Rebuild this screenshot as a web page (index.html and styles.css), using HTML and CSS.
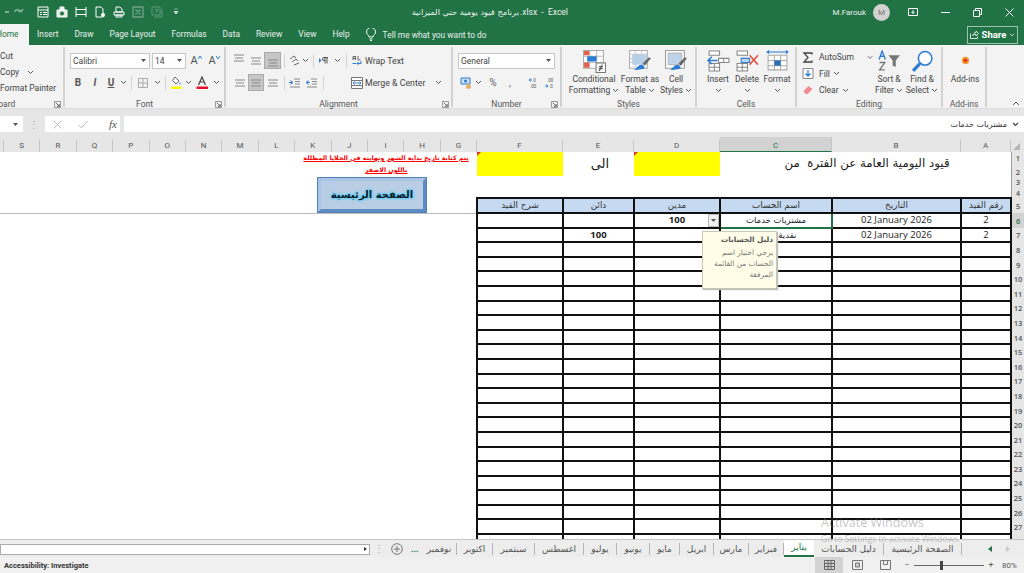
FILE: index.html
```html
<!DOCTYPE html>
<html lang="en">
<head>
    <meta charset="UTF-8">
    <title>Excel</title>
    <link rel="stylesheet" href="styles.css">
</head>
<body>
    <svg class="sprite" width="0" height="0">
        <symbol id="chev" viewBox="0 0 7 5"><path d="M1 1l2.500 2.500L6 1" fill="none" stroke="#555" stroke-width="1"/></symbol>
        <symbol id="launch" viewBox="0 0 8 8"><path d="M.5.5h7v7h-7z" fill="none" stroke="#888"/><path d="M2 2l4 4M6 3.500V6H3.500" fill="none" stroke="#555"/></symbol>
        <symbol id="lines" viewBox="0 0 12 8"><path d="M1 1h10M2 4h8M1 7h10" stroke="#888" fill="none"/></symbol>
    </svg>

    <div class="titlebar">
        <div class="qat">
            <svg class="q q-undo" width="20" height="12" viewBox="0 0 20 12"><path d="M-4 6h8" stroke="#7fae94" stroke-width="2"/><path d="M10 6c0-3 5-3 6 0M16 6l2-3M16 6l-3-1" fill="none" stroke="#7fae94" stroke-width="1.500"/></svg>
            <svg class="q" width="12" height="12" viewBox="0 0 12 12"><path d="M1 1h10v10H1z" fill="none" stroke="#fff"/><path d="M1 4h10M3 6.500h2M6 6.500h4M3 8.500h2M6 8.500h4" stroke="#fff"/></svg>
            <svg class="q" width="12" height="12" viewBox="0 0 12 12"><path d="M1 4h10v7H1zM4 1h4v3H4z" fill="#dfeae3" stroke="#fff"/><circle cx="6" cy="7.500" r="2" fill="#217346"/></svg>
            <svg class="q" width="12" height="12" viewBox="0 0 12 12"><path d="M1 1v10M11 1v10M1 3.500h10M1 8.500h10" fill="none" stroke="#fff"/></svg>
            <svg class="q" width="12" height="12" viewBox="0 0 12 12"><path d="M2 1h5l2 2v8H2z" fill="none" stroke="#fff"/><circle cx="9" cy="9" r="2" fill="#fff"/></svg>
            <svg class="q" width="12" height="12" viewBox="0 0 12 12"><path d="M3 1h4l2 2v3H3zM1 6h10v3H1zM3 9h6v2H3z" fill="none" stroke="#fff"/></svg>
            <svg class="q" width="12" height="12" viewBox="0 0 12 12"><path d="M1 1h10v10H1zM3.500 3.500l5 5M8.500 3.500l-5 5" fill="none" stroke="#6fa488" stroke-width="1.300"/></svg>
            <svg class="q" width="12" height="12" viewBox="0 0 12 12"><path d="M1 1h8v8H1zM3 11h8V3M4 3.500h3L5 7" fill="none" stroke="#5f9a7a"/></svg>
            <svg class="q" width="12" height="12" viewBox="0 0 12 12"><path d="M4.500 3h3M4 5.500h4L6 8z" fill="#e8f0eb" stroke="#e8f0eb" stroke-width=".6"/></svg>
        </div>
        <div class="doc-title"><span class="ar" dir="rtl">برنامج قيود يومية حتي الميزانية</span><span>.xlsx &nbsp;- &nbsp;Excel</span></div>
        <div class="account">
            <span class="user">M.Farouk</span>
            <span class="avatar">M</span>
            <div class="win-btns">
                <svg width="10" height="8" viewBox="0 0 10 8"><path d="M.5.5h9v7h-9z" fill="none" stroke="#fff"/><path d="M5 2v3.500M3.500 4L5 5.500 6.500 4" fill="none" stroke="#fff"/></svg>
                <svg width="9" height="1" viewBox="0 0 9 1"><path d="M0 .5h9" stroke="#fff"/></svg>
                <svg width="9" height="9" viewBox="0 0 9 9"><path d="M.5 2.500h6v6h-6zM2.500 2.500v-2h6v6h-2" fill="none" stroke="#fff"/></svg>
                <svg width="9" height="9" viewBox="0 0 9 9"><path d="M.5.5l8 8M8.500.5l-8 8" stroke="#fff"/></svg>
            </div>
        </div>
    </div>

    <div class="tabbar">
        <span class="tab home">Home</span>
        <span class="tab">Insert</span>
        <span class="tab">Draw</span>
        <span class="tab">Page Layout</span>
        <span class="tab">Formulas</span>
        <span class="tab">Data</span>
        <span class="tab">Review</span>
        <span class="tab">View</span>
        <span class="tab">Help</span>
        <span class="tell">
            <svg width="10" height="13" viewBox="0 0 10 13"><path d="M3 9c0-2-2.500-2.500-2.500-5a4.500 4.500 0 0 1 9 0C9.500 6.500 7 7 7 9zM3.500 11h3M4 12.500h2" fill="none" stroke="#fff"/></svg>
            Tell me what you want to do
        </span>
        <span class="share">
            <svg width="9" height="9" viewBox="0 0 9 9"><path d="M.5 3.500v5h7v-2M3 5.500c0-2 2-3 3-3V1l2.500 2.500L6 6V4.500c-1 0-2.500 0-3 1z" fill="none" stroke="#fff" stroke-width=".8"/></svg>
            <b>Share</b>
            <svg class="chev-w" width="6" height="4" viewBox="0 0 7 5"><path d="M1 1l2.500 2.500L6 1" fill="none" stroke="#fff"/></svg>
        </span>
    </div>

    <div class="ribbon">
        <section class="group g-clip">
            <div class="body clip-body">
                <div>Cut</div>
                <div class="copy">Copy <svg class="chev"><use href="#chev"/></svg></div>
                <div>Format Painter</div>
            </div>
            <div class="label clip-label"><span>Clipboard</span><svg class="launch"><use href="#launch"/></svg></div>
        </section>

        <section class="group g-font">
            <div class="body stack">
                <div class="row">
                    <div class="combo c80">Calibri<svg class="caret" width="5" height="3" viewBox="0 0 5 3"><path d="M0 0h5L2.500 3z" fill="#555"/></svg></div>
                    <div class="combo c34">14<svg class="caret" width="5" height="3" viewBox="0 0 5 3"><path d="M0 0h5L2.500 3z" fill="#555"/></svg></div>
                    <span class="t t18 grow-a">A<svg width="4" height="3" viewBox="0 0 4 3"><path d="M0 3l2-3 2 3" fill="none" stroke="#2b7cd3"/></svg></span>
                    <span class="t t18 grow-a">A<svg width="4" height="3" viewBox="0 0 4 3"><path d="M0 0l2 3 2-3" fill="none" stroke="#2b7cd3"/></svg></span>
                </div>
                <div class="row">
                    <span class="t t16 fmt"><b>B</b></span>
                    <span class="t t18 fmt"><b><em>I</em></b></span>
                    <span class="t t14 fmt"><b><u>U</u></b></span>
                    <span class="t t10"><svg class="chev"><use href="#chev"/></svg></span>
                    <span class="t t6"><i class="sep"></i></span>
                    <span class="t t18"><svg width="10" height="10" viewBox="0 0 10 10"><path d="M.5.500h9v9h-9zM5 .5v9M.5 5h9" fill="none" stroke="#aaa"/></svg></span>
                    <span class="t t10"><svg class="chev"><use href="#chev"/></svg></span>
                    <span class="t t6"><i class="sep"></i></span>
                    <span class="t t16"><svg width="12" height="13" viewBox="0 0 12 13"><path d="M5 1l4 4-3 3-3.500-3.500z" fill="#fff" stroke="#666"/><path d="M10 6c1 1.500 1 2.500 0 2.500S9 7.500 10 6" fill="#5b9bd5"/><path d="M1 10.500h10.500V13H1z" fill="#ffff00"/></svg></span>
                    <span class="t t8"><svg class="chev"><use href="#chev"/></svg></span>
                    <span class="t t20"><svg width="12" height="13" viewBox="0 0 12 13"><path d="M2.500 9L6 1l3.500 8M4 6h4" fill="none" stroke="#444" stroke-width="1.200"/><path d="M.5 10.500H12V13H.5z" fill="#e8112d"/></svg></span>
                    <span class="t t8"><svg class="chev"><use href="#chev"/></svg></span>
                </div>
            </div>
            <div class="label"><span>Font</span><svg class="launch"><use href="#launch"/></svg></div>
        </section>

        <section class="group g-align">
            <div class="body stack">
                <div class="row">
                    <span class="t t16"><svg class="al al-top"><use href="#lines"/></svg></span>
                    <span class="t t17"><svg class="al"><use href="#lines"/></svg></span>
                    <span class="t t17 on"><svg class="al al-low"><use href="#lines"/></svg></span>
                    <span class="t t6"><i class="sep"></i></span>
                    <span class="t t14"><svg width="11" height="11" viewBox="0 0 11 11"><path d="M1 4l4-3 2 2M3 7l4-3 2 2M5 10l5-2" fill="none" stroke="#666"/></svg></span>
                    <span class="t t8"><svg class="chev"><use href="#chev"/></svg></span>
                    <span class="t t8"><i class="sep"></i></span>
                    <span class="t t14"><svg width="10" height="7" viewBox="0 0 10 7"><path d="M0 1l2.500 2.500L0 6z" fill="#2b7cd3"/><path d="M5 .5h4M6 .5v6M8 .5v6M5 .5a1.500 1.500 0 0 0 0 3h1" fill="none" stroke="#555"/></svg></span>
                    <span class="t t12"><svg class="chev"><use href="#chev"/></svg></span>
                    <span class="t t6"><i class="sep"></i></span>
                    <span class="t t16"><svg width="10" height="11" viewBox="0 0 10 11"><path d="M1 5V1.500h2.500V5M1 3.500h2.500M6 1v4h2.500" fill="none" stroke="#444" stroke-width=".8"/><path d="M4 8.500h-3.500M9 6v2.500H5M6.500 7L5 8.500 6.500 10" fill="none" stroke="#2b7cd3"/></svg></span>
                    <span class="txt">Wrap Text</span>
                </div>
                <div class="row">
                    <span class="t t17"><svg class="al"><use href="#lines"/></svg></span>
                    <span class="t t16 on"><svg class="al"><use href="#lines"/></svg></span>
                    <span class="t t18"><svg class="al"><use href="#lines"/></svg></span>
                    <span class="t t4"><i class="sep"></i></span>
                    <span class="t t16"><svg width="11" height="10" viewBox="0 0 11 10"><path d="M5 1h6M6 3.500h5M6 6h5M1 9h10" stroke="#888"/><path d="M0 4.500h3M1.500 2.500L4 4.500 1.500 6.500" fill="none" stroke="#2b7cd3"/></svg></span>
                    <span class="t t18"><svg width="11" height="10" viewBox="0 0 11 10"><path d="M5 1h6M6 3.500h5M6 6h5M1 9h10" stroke="#888"/><path d="M4 4.500H1M2.500 2.500L0 4.500l2.500 2" fill="none" stroke="#2b7cd3"/></svg></span>
                    <span class="t t6"><i class="sep"></i></span>
                    <span class="t t23"></span>
                    <span class="t t16"><svg width="12" height="12" viewBox="0 0 12 12"><path d="M.5.500h11v11H.5zM.5 3.500h11M.5 8.500h11" fill="#fff" stroke="#777"/><path d="M2 6h8M3.500 4.500L2 6l1.500 1.500M8.500 4.500L10 6 8.500 7.500" fill="none" stroke="#2b7cd3"/></svg></span>
                    <span class="txt merge">Merge &amp; Center</span>
                    <span class="t t26"><svg class="chev"><use href="#chev"/></svg></span>
                </div>
            </div>
            <div class="label"><span>Alignment</span><svg class="launch"><use href="#launch"/></svg></div>
        </section>

        <section class="group g-num">
            <div class="body stack">
                <div class="row">
                    <div class="combo c97">General<svg class="caret" width="5" height="3" viewBox="0 0 5 3"><path d="M0 0h5L2.500 3z" fill="#555"/></svg></div>
                </div>
                <div class="row">
                    <span class="t t16"><svg width="12" height="12" viewBox="0 0 12 12"><path d="M1 1h9v6H1z" fill="#cfe2f5" stroke="#2b7cd3"/><circle cx="5.500" cy="4" r="1.500" fill="#2b7cd3"/><circle cx="8.500" cy="9.500" r="2.500" fill="#e5b06a"/></svg></span>
                    <span class="t t8"><svg class="chev"><use href="#chev"/></svg></span>
                    <span class="t t22 sym">%</span>
                    <span class="t t12 sym">,</span>
                    <span class="t t10"></span>
                    <span class="t t16"><svg width="11" height="11" viewBox="0 0 11 11"><text class="dec" x="3" y="4.500">.0</text><text class="dec" x="1" y="10.500">.00</text><path d="M0 3h3M1.500 1.500L0 3l1.500 1.500" fill="none" stroke="#2b7cd3"/></svg></span>
                    <span class="t t16"><svg width="11" height="11" viewBox="0 0 11 11"><text class="dec" x="2" y="4.500">.00</text><text class="dec" x="4" y="10.500">.0</text><path d="M0 9h3M1.500 7.500L3 9 1.500 10.500" fill="none" stroke="#2b7cd3"/></svg></span>
                </div>
            </div>
            <div class="label"><span>Number</span><svg class="launch"><use href="#launch"/></svg></div>
        </section>

        <section class="group g-styles">
            <div class="body bigs">
                <div class="big b52">
                    <svg width="22" height="22" viewBox="0 0 22 22"><path d="M.5.500h19v17H.5z" fill="#fff" stroke="#aaa"/><path d="M6.500.5v17M13 .5v17M.5 6h19M.5 12h19" stroke="#bbb"/><path d="M1 1h5v4H1zM1 12h5v5H1z" fill="#e8604c"/><path d="M4 6h9v5H4z" fill="#2b7cd3"/><path d="M12.500 12.500h9v9h-9z" fill="#fff" stroke="#777"/><path d="M15 16h4M15 18h4M18.500 14l-3 6" fill="none" stroke="#444"/></svg>
                    <span>Conditional</span><span>Formatting <svg class="chev"><use href="#chev"/></svg></span>
                </div>
                <div class="big b40">
                    <svg width="22" height="22" viewBox="0 0 22 22"><path d="M.5.500h17v17H.5z" fill="#fff" stroke="#aaa"/><path d="M.5 4h17M.5 8h17M.5 12h17M6 .5v17M12 .5v17" stroke="#ccc"/><path d="M3 4h14v10H3z" fill="#b9cfe8"/><path d="M21 8l-6 7-2-2 6-6z" fill="#666"/><path d="M12 14c2 0 2.500 2 3 3 .5 1.500-9 2.500-11 2 3 0 4-5 8-5z" fill="#2b7cd3"/></svg>
                    <span>Format as</span><span>Table <svg class="chev"><use href="#chev"/></svg></span>
                </div>
                <div class="big b32">
                    <svg width="22" height="22" viewBox="0 0 22 22"><path d="M.5.500h18v17H.5z" fill="#fff" stroke="#999"/><path d="M3 3h13v11H3z" fill="#bed3ec" stroke="#bbb"/><path d="M21 8l-6 7-2-2 6-6z" fill="#666"/><path d="M12 14c2 0 2.500 2 3 3 .5 1.500-9 2.500-11 2 3 0 4-5 8-5z" fill="#2b7cd3"/></svg>
                    <span>Cell</span><span>Styles <svg class="chev"><use href="#chev"/></svg></span>
                </div>
            </div>
            <div class="label"><span>Styles</span></div>
        </section>

        <section class="group g-cells">
            <div class="body bigs">
                <div class="big b28">
                    <svg width="22" height="22" viewBox="0 0 22 22"><path d="M2 1h10v4H2zM2 13h10v7H2zM7 13v7M2 16.500h10M11 8h10v4H11zM16 8v4" fill="#fff" stroke="#888"/><path d="M10 10H1M4.500 6.500L1 10l3.500 3.500" fill="none" stroke="#2b7cd3" stroke-width="1.500"/></svg>
                    <span>Insert</span><span><svg class="chev"><use href="#chev"/></svg></span>
                </div>
                <div class="big b30">
                    <svg width="22" height="22" viewBox="0 0 22 22"><path d="M1 1h10v4H1zM1 13h10v7H1zM6 13v7M1 16.500h10" fill="#fff" stroke="#888"/><path d="M5 8h8v4H5z" fill="#bcd3ec" stroke="#2b7cd3"/><path d="M13 5l8 9M21 5l-8 9" stroke="#e0533d" stroke-width="1.500"/></svg>
                    <span>Delete</span><span><svg class="chev"><use href="#chev"/></svg></span>
                </div>
                <div class="big b30">
                    <svg width="22" height="22" viewBox="0 0 22 22"><path d="M2 5h18v14H2zM8 5v14M14 5v14M2 10h18M2 15h18" fill="#fff" stroke="#aaa"/><path d="M8 10h6v5H8z" fill="#2b6cb8"/><path d="M1 2h20M3 .5L1 2l2 1.500M19 .5L21 2l-2 1.500" fill="none" stroke="#2b7cd3"/></svg>
                    <span>Format</span><span><svg class="chev"><use href="#chev"/></svg></span>
                </div>
            </div>
            <div class="label"><span>Cells</span></div>
        </section>

        <section class="group g-edit">
            <div class="body bigs">
                <div class="small-col">
                    <div class="small"><svg width="10" height="11" viewBox="0 0 10 11"><path d="M9 2.500V1H1l4 4.500L1 10h8V8.500" fill="none" stroke="#444" stroke-width="1.300"/></svg><span>AutoSum</span><svg class="chev auto-chev"><use href="#chev"/></svg></div>
                    <div class="small"><svg width="11" height="11" viewBox="0 0 11 11"><path d="M.5.500h10v10H.5z" fill="#fff" stroke="#888"/><path d="M5.500 2v6M3 5.500l2.500 2.500L8 5.500" fill="none" stroke="#2b7cd3" stroke-width="1.300"/></svg><span>Fill</span><svg class="chev"><use href="#chev"/></svg></div>
                    <div class="small"><svg width="11" height="10" viewBox="0 0 11 10"><path d="M1 6l5-5 4 3-5 5H3z" fill="#f08a93"/></svg><span>Clear</span><svg class="chev"><use href="#chev"/></svg></div>
                </div>
                <div class="big b32">
                    <svg width="22" height="22" viewBox="0 0 22 22"><path d="M1 9l3-8 3 8M2 6h4" fill="none" stroke="#2b7cd3" stroke-width="1.300"/><path d="M1.500 12h5l-5 7h5" fill="none" stroke="#777" stroke-width="1.300"/><path d="M10 5h11l-4 5v6l-3-1v-5z" fill="#777"/></svg>
                    <span>Sort &amp;</span><span>Filter <svg class="chev"><use href="#chev"/></svg></span>
                </div>
                <div class="big b34">
                    <svg width="22" height="22" viewBox="0 0 22 22"><circle cx="13.500" cy="8" r="6.500" fill="#fff" stroke="#2b7cd3" stroke-width="1.500"/><path d="M8.500 13L2 20" stroke="#2b7cd3" stroke-width="3"/></svg>
                    <span>Find &amp;</span><span>Select <svg class="chev"><use href="#chev"/></svg></span>
                </div>
            </div>
            <div class="label"><span>Editing</span></div>
        </section>

        <section class="group g-addin">
            <div class="body bigs">
                <div class="big b44">
                    <svg width="22" height="22" viewBox="0 0 22 22"><circle cx="11" cy="10" r="3.500" fill="#f0a030"/><circle cx="11" cy="10" r="1.800" fill="#e5352b"/></svg>
                    <span>Add-ins</span>
                </div>
            </div>
            <div class="label"><span>Add-ins</span></div>
        </section>

        <svg class="collapse" width="8" height="5" viewBox="0 0 8 5"><path d="M1 4l3-3 3 3" fill="none" stroke="#555"/></svg>
    </div>

    <div class="formula">
        <div class="namebox"><svg class="caret" width="5" height="3" viewBox="0 0 5 3"><path d="M0 0h5L2.500 3z" fill="#555"/></svg></div>
        <span class="grip">⋮</span>
        <div class="fx-btns">
            <svg width="9" height="9" viewBox="0 0 9 9"><path d="M.5.500l8 8M8.500.5l-8 8" stroke="#bbb"/></svg>
            <svg width="10" height="9" viewBox="0 0 10 9"><path d="M.5 5l3 3 6-7" fill="none" stroke="#bbb"/></svg>
            <span class="fx">fx</span>
        </div>
        <div class="fbar">
            <span class="ar">مشتريات خدمات</span>
            <svg width="7" height="5" viewBox="0 0 7 5"><path d="M1 1l2.500 2.500L6 1" fill="none" stroke="#444" stroke-width="1.200"/></svg>
        </div>
    </div>

    <div class="colhead">
        <span></span><span>S</span><span>R</span><span>Q</span><span>P</span><span>O</span><span>N</span><span>M</span><span>L</span><span>K</span><span>J</span><span>I</span><span>H</span><span>G</span>
        <span>F</span><span>E</span><span>D</span><span class="sel">C</span><span>B</span><span>A</span>
        <span class="corner"></span>
    </div>

    <div class="sheet">
        <table>
            <colgroup><col class="c-left"><col class="c-f"><col class="c-e"><col class="c-d"><col class="c-c"><col class="c-b"><col class="c-a"><col class="c-rh"></colgroup>
            <tr class="r1">
                <td class="free" rowspan="2"><p class="note ar">يتم كتابة تاريخ بداية الشهر ونهايته في الخلايا المظللة<br>باللون الاصفر</p></td>
                <td class="free yellow flag" rowspan="2"></td>
                <td class="free to ar" rowspan="2">الى</td>
                <td class="free yellow flag" rowspan="2"></td>
                <td class="free heading ar" colspan="3" rowspan="2">قيود اليومية العامة عن الفترة &nbsp;من</td>
                <td class="rh">1</td>
            </tr>
            <tr class="r2"><td class="rh low">2</td></tr>
            <tr class="r3">
                <td class="free pane" rowspan="3"><div class="btn-wrap"><a class="main-btn ar">الصفحة الرئيسية</a></div></td>
                <td class="free" colspan="6" rowspan="2"></td>
                <td class="rh">3</td>
            </tr>
            <tr class="r4"><td class="rh">4</td></tr>
            <tr class="r5 hd ar">
                <td>شرح القيد</td><td>دائن</td><td>مدين</td><td>اسم الحساب</td><td>التاريخ</td><td>رقم القيد</td><td class="rh">5</td>
            </tr>
            <tr>
                <td class="free"></td><td></td><td></td><td class="num dd-cell">100<span class="dd"><svg width="5" height="3" viewBox="0 0 5 3"><path d="M0 0h5L2.500 3z" fill="#555"/></svg></span></td><td class="active ar">مشتريات خدمات</td><td class="val">02 January 2026</td><td class="val">2</td><td class="rh rh-on">6</td>
            </tr>
            <tr>
                <td class="free"></td><td></td><td class="num">100</td><td></td><td class="val ar">نقدية بالبنك</td><td class="val">02 January 2026</td><td class="val">2</td><td class="rh">7</td>
            </tr>
            <tr><td class="free"></td><td></td><td></td><td></td><td></td><td></td><td></td><td class="rh">8</td></tr>
            <tr><td class="free"></td><td></td><td></td><td></td><td></td><td></td><td></td><td class="rh">9</td></tr>
            <tr><td class="free"></td><td></td><td></td><td></td><td></td><td></td><td></td><td class="rh">10</td></tr>
            <tr><td class="free"></td><td></td><td></td><td></td><td></td><td></td><td></td><td class="rh">11</td></tr>
            <tr><td class="free"></td><td></td><td></td><td></td><td></td><td></td><td></td><td class="rh">12</td></tr>
            <tr><td class="free"></td><td></td><td></td><td></td><td></td><td></td><td></td><td class="rh">13</td></tr>
            <tr><td class="free"></td><td></td><td></td><td></td><td></td><td></td><td></td><td class="rh">14</td></tr>
            <tr><td class="free"></td><td></td><td></td><td></td><td></td><td></td><td></td><td class="rh">15</td></tr>
            <tr><td class="free"></td><td></td><td></td><td></td><td></td><td></td><td></td><td class="rh">16</td></tr>
            <tr><td class="free"></td><td></td><td></td><td></td><td></td><td></td><td></td><td class="rh">17</td></tr>
            <tr><td class="free"></td><td></td><td></td><td></td><td></td><td></td><td></td><td class="rh">18</td></tr>
            <tr><td class="free"></td><td></td><td></td><td></td><td></td><td></td><td></td><td class="rh">19</td></tr>
            <tr><td class="free"></td><td></td><td></td><td></td><td></td><td></td><td></td><td class="rh">20</td></tr>
            <tr><td class="free"></td><td></td><td></td><td></td><td></td><td></td><td></td><td class="rh">21</td></tr>
            <tr><td class="free"></td><td></td><td></td><td></td><td></td><td></td><td></td><td class="rh">22</td></tr>
            <tr><td class="free"></td><td></td><td></td><td></td><td></td><td></td><td></td><td class="rh">23</td></tr>
            <tr><td class="free"></td><td></td><td></td><td></td><td></td><td></td><td></td><td class="rh">24</td></tr>
            <tr><td class="free"></td><td></td><td></td><td></td><td></td><td></td><td></td><td class="rh">25</td></tr>
            <tr><td class="free"></td><td></td><td></td><td></td><td></td><td></td><td></td><td class="rh">26</td></tr>
            <tr><td class="free"></td><td></td><td></td><td></td><td></td><td></td><td></td><td class="rh">27</td></tr>
            <tr><td class="free"></td><td></td><td></td><td></td><td></td><td></td><td></td><td class="rh"></td></tr>
        </table>
        <div class="tooltip ar" dir="rtl">
            <b>دليل الحسابات</b>
            <p>يرجي اختيار اسم الحساب من القائمة المرفقة</p>
        </div>
    </div>

    <div class="sheettabs">
        <div class="hscroll"><span class="arrow-r"></span></div>
        <span class="grip grip-tabs">⋮</span>
        <svg class="plus" width="12" height="12" viewBox="0 0 12 12"><circle cx="6" cy="6" r="5.300" fill="none" stroke="#777"/><path d="M3 6h6M6 3v6" stroke="#777"/></svg>
        <span class="dots">...</span>
        <div class="stabs ar">
            <span class="st35">نوفمبر</span>
            <span class="st36">اكتوبر</span>
            <span class="st42">سبتمبر</span>
            <span class="st49">اغسطس</span>
            <span class="st33">يوليو</span>
            <span class="st33">يونيو</span>
            <span class="st30">مايو</span>
            <span class="st34">ابريل</span>
            <span class="st35">مارس</span>
            <span class="st35">فبراير</span>
            <span class="st30 st-on">يناير</span>
            <span class="st70">دليل الحسابات</span>
            <span class="st78">الصفحة الرئيسية</span>
        </div>
        <div class="tab-nav">
            <svg width="4" height="6" viewBox="0 0 4 6"><path d="M4 0v6L0 3z" fill="#217346"/></svg>
            <svg width="4" height="6" viewBox="0 0 4 6"><path d="M0 0v6l4-3z" fill="#c8c8c8"/></svg>
        </div>
    </div>

    <div class="status">
        <span class="acc">Accessibility: Investigate</span>
        <div class="views">
            <span class="view view-on"><svg width="11" height="10" viewBox="0 0 11 10"><path d="M.5.500h10v9H.5zM4 .5v9M7 .5v9M.5 3.500h10M.5 6.500h10" fill="none" stroke="#666"/></svg></span>
            <span class="view"><svg width="11" height="10" viewBox="0 0 11 10"><path d="M.5.500h10v9H.5z" fill="none" stroke="#777"/><path d="M3.500 3h4v4h-4z" fill="#ccc" stroke="#777"/></svg></span>
            <span class="view"><svg width="11" height="10" viewBox="0 0 11 10"><path d="M.5.500h10v9H.5zM3.500.5v4h4v-4" fill="none" stroke="#777"/></svg></span>
        </div>
        <div class="zoom">
            <span class="zm">−</span>
            <div class="slider"><i class="thumb"></i></div>
            <span class="zm">+</span>
            <span class="pct">80%</span>
        </div>
    </div>

    <div class="activate">
        <div class="a1">Activate Windows</div>
        <div class="a2">Go to Settings to activate Windows.</div>
    </div>
</body>
</html>
```
FILE: styles.css
```css
* {
    box-sizing: border-box;
}
html, body {
    margin: 0;
    height: 100%;
}
body {
    position: relative;
    width: 1024px;
    height: 573px;
    overflow: hidden;
    display: flex;
    flex-direction: column;
    font-family: Roboto, sans-serif;
    font-size: 8.500px;
    color: #444;
    background-color: #e6e6e6;
}
.ar {
    font-family: "DejaVu Sans", sans-serif;
}
.sprite {
    position: absolute;
}

/* title bar + tabs */
.titlebar {
    height: 24px;
    flex: none;
    display: flex;
    align-items: center;
    background-color: #217346;
    color: #e9f1ec;
    position: relative;
}
.qat {
    display: flex;
    align-items: center;
    gap: 7px;
    padding-left: 5px;
}
.qat .q-undo {
    margin-right: 5px;
}
.doc-title {
    position: absolute;
    left: 410px;
    white-space: nowrap;
    font-size: 8.500px;
    display: flex;
    align-items: center;
    gap: 1px;
}
.doc-title .ar {
    display: block;
    width: 109px;
    font-size: 8.300px;
}
.account {
    margin-left: auto;
    display: flex;
    align-items: center;
    font-size: 8px;
}
.user {
    margin-right: 7px;
}
.avatar {
    width: 17px;
    height: 17px;
    border-radius: 50%;
    background-color: #d2d2d2;
    color: #777;
    display: flex;
    align-items: center;
    justify-content: center;
    font-size: 8px;
}
.win-btns {
    display: flex;
    align-items: center;
    gap: 23px;
    margin-left: 18px;
    padding-right: 10px;
}
.tabbar {
    height: 21px;
    flex: none;
    display: flex;
    align-items: center;
    background-color: #217346;
    color: #e9f1ec;
    font-size: 8.400px;
}
.tab {
    padding: 0 8px;
    height: 21px;
    line-height: 20px;
}
.tab.home {
    margin-left: -12px;
    width: 41px;
    background-color: #f3f3f3;
    color: #217346;
}
.tell {
    margin-left: 8px;
    display: flex;
    align-items: center;
    gap: 7px;
}
.share {
    margin-left: auto;
    margin-right: 6px;
    width: 51px;
    height: 18px;
    border: 1px solid #9dc2ad;
    display: flex;
    align-items: center;
    justify-content: center;
    gap: 3px;
    font-size: 9.500px;
    color: #fff;
}

/* ribbon */
.ribbon {
    height: 64px;
    flex: none;
    display: flex;
    position: relative;
    background-color: #f3f3f3;
    border-bottom: 1px solid #dcdcdc;
}
.group {
    flex: none;
    display: flex;
    flex-direction: column;
    border-right: 2px solid #d2d2d2;
    height: 60px;
    margin-top: 2px;
}
.g-clip { width: 65px; }
.g-font { width: 161px; }
.g-align { width: 227px; }
.g-num { width: 109px; }
.g-styles { width: 135px; }
.g-cells { width: 100px; }
.g-edit { width: 146px; }
.g-addin { width: 44px; }
.body {
    height: 53px;
    flex: none;
}
.label {
    position: relative;
    height: 9px;
    flex: none;
    line-height: 9px;
    text-align: center;
    font-size: 8.500px;
    color: #555;
}
.launch {
    position: absolute;
    right: 2px;
    top: 1px;
    width: 7px;
    height: 7px;
}
.clip-body {
    padding-top: 1px;
}
.clip-body div {
    height: 16px;
    line-height: 16px;
    white-space: nowrap;
}
.clip-body .copy .chev {
    margin-left: 6px;
}
.clip-label {
    text-align: left;
}
.clip-label span {
    margin-left: -21px;
}
.stack {
    padding: 6px 0 0 5px;
    display: flex;
    flex-direction: column;
    gap: 7px;
}
.row {
    display: flex;
    align-items: center;
    height: 15px;
}
.chev {
    width: 7px;
    height: 5px;
    vertical-align: 0;
}
.combo {
    height: 16px;
    display: flex;
    align-items: center;
    justify-content: space-between;
    padding: 0 3px 0 2px;
    background-color: #fff;
    border: 1px solid #c6c6c6;
    flex: none;
}
.c80 { width: 80px; margin-right: 2px; }
.c34 { width: 34px; margin-right: 1px; }
.c97 { width: 97px; }
.t {
    flex: none;
    height: 17px;
    display: flex;
    align-items: center;
    justify-content: center;
}
.t4 { width: 4px; }
.t6 { width: 6px; }
.t8 { width: 8px; }
.t10 { width: 10px; }
.t12 { width: 12px; }
.t14 { width: 14px; }
.t16 { width: 16px; }
.t17 { width: 17px; }
.t18 { width: 18px; }
.t20 { width: 20px; }
.t22 { width: 22px; }
.t23 { width: 23px; }
.t26 { width: 26px; }
.on {
    background-color: #c6c6c6;
    border: 1px solid #aaa;
}
.sep {
    display: block;
    width: 1px;
    height: 14px;
    background-color: #d4d4d4;
}
.fmt {
    font-size: 10px;
    color: #555;
}
.grow-a {
    font-size: 11px;
    color: #555;
}
.grow-a svg {
    margin-top: -7px;
}
.al {
    width: 12px;
    height: 8px;
}
.al-top {
    margin-bottom: 5px;
}
.al-low {
    margin-top: 4px;
}
.txt {
    white-space: nowrap;
    font-size: 8.800px;
}
.merge {
    width: 60px;
}
.sym {
    font-size: 10px;
    color: #666;
}
.dec {
    font-size: 4.500px;
    fill: #555;
}
.bigs {
    display: flex;
}
.g-styles .bigs { padding-left: 6px; }
.g-cells .bigs { padding-left: 7px; }
.g-edit .bigs { padding-left: 4px; }
.big {
    display: flex;
    flex-direction: column;
    align-items: center;
    padding-top: 3px;
    flex: none;
    white-space: nowrap;
}
.big > svg {
    height: 23px;
    width: 23px;
    flex: none;
    margin-bottom: 1px;
}
.big span {
    height: 11px;
    line-height: 11px;
}
.b28 { width: 28px; }
.b30 { width: 30px; }
.b32 { width: 32px; }
.b34 { width: 34px; }
.b40 { width: 40px; }
.b44 { width: 44px; }
.b52 { width: 52px; }
.small-col {
    width: 72px;
    padding-top: 2px;
    flex: none;
}
.small {
    height: 16.500px;
    display: flex;
    align-items: center;
    gap: 3px;
}
.small > svg:first-child {
    flex: none;
    width: 14px;
    margin-right: 1px;
}
.auto-chev {
    margin-left: 10px;
}
.collapse {
    position: absolute;
    right: 4px;
    bottom: 2px;
}

/* formula bar */
.formula {
    height: 28px;
    flex: none;
    display: flex;
    align-items: center;
    padding-top: 2px;
    background-color: #e6e6e6;
}
.namebox {
    width: 23px;
    height: 16px;
    background-color: #fff;
    display: flex;
    align-items: center;
    justify-content: flex-end;
    padding-right: 5px;
}
.grip {
    width: 22px;
    text-align: center;
    font-size: 10px;
    color: #aaa;
}
.fx-btns {
    width: 75px;
    height: 16px;
    background-color: #fff;
    display: flex;
    align-items: center;
    gap: 16px;
    padding-left: 8px;
}
.fx {
    margin-left: 5px;
    font-family: "Liberation Serif", serif;
    font-style: italic;
    font-size: 11px;
    color: #555;
}
.fbar {
    margin-left: 4px;
    flex: 1;
    height: 16px;
    background-color: #fff;
    display: flex;
    align-items: center;
    justify-content: flex-end;
    gap: 5px;
    padding-right: 5px;
    font-size: 8px;
    color: #333;
}

/* column headers */
.colhead {
    height: 15px;
    flex: none;
    display: grid;
    grid-template-columns: 4px repeat(13, 36.4px) 86px 71px 86px 112px 129px 50px 13px;
    background-color: #e6e6e6;
    font-size: 8px;
    color: #555;
}
.colhead span {
    height: 12px;
    margin-top: 3px;
    line-height: 12px;
    text-align: center;
    border-right: 1px solid #c6c6c6;
}
.colhead .sel {
    height: 15px;
    margin-top: 0;
    line-height: 18px;
    background-color: #d2d2d2;
    border-bottom: 1px solid #217346;
    color: #217346;
}
.colhead .corner {
    border: 0;
    position: relative;
}
.colhead .corner::after {
    content: "";
    position: absolute;
    right: 4px;
    bottom: 2px;
    border-style: solid;
    border-width: 0 0 7px 7px;
    border-color: transparent transparent #b5b5b5 transparent;
}

/* sheet */
.sheet {
    height: 387px;
    flex: none;
    position: relative;
    overflow: hidden;
    background-color: #fff;
}
table {
    width: 1024px;
    table-layout: fixed;
    border-collapse: collapse;
    background-color: #fff;
}
.c-left { width: 477px; }
.c-f { width: 86px; }
.c-e { width: 71px; }
.c-d { width: 86px; }
.c-c { width: 112px; }
.c-b { width: 129px; }
.c-a { width: 50px; }
.c-rh { width: 13px; }
tr {
    height: 14.600px;
}
.r1 { height: 11px; }
.r2 { height: 13px; }
.r3 { height: 10px; }
.r4 { height: 12px; }
.r5 { height: 15px; }
td {
    padding: 0;
    border: 2px solid #111;
    font-size: 8px;
    line-height: 10px;
    text-align: center;
    color: #222;
    overflow: hidden;
    white-space: nowrap;
}
td.free {
    border: none;
}
td.pane {
    border-bottom: 1px solid #bcbcbc;
    vertical-align: bottom;
}
td.rh {
    border: none;
    border-left: 1px solid #999;
    background-color: #e6e6e6;
    font-family: "Open Sans", sans-serif;
    font-size: 7.500px;
    font-weight: 600;
    color: #555;
    line-height: 8px;
    padding-top: 1px;
}
td.low {
    vertical-align: bottom;
}
td.rh-on {
    background-color: #d2d2d2;
    color: #217346;
    border-left: 2px solid #217346;
}
.yellow {
    background-color: #ffff00;
    position: relative;
}
.flag::before {
    content: "";
    position: absolute;
    left: 0;
    top: 0;
    border-style: solid;
    border-width: 4px 4px 0 0;
    border-color: #e0312a transparent transparent transparent;
}
td.to {
    font-size: 13px;
    line-height: 24px;
    padding-left: 3px;
    color: #222;
}
td.heading {
    font-size: 11.800px;
    line-height: 14px;
    text-align: right;
    padding-right: 61px;
    padding-bottom: 3px;
    color: #222;
    direction: rtl;
}
.note {
    margin: 0 0 0 auto;
    width: 182px;
    font-size: 6.300px;
    line-height: 12px;
    font-weight: bold;
    color: #ff0000;
    text-decoration: underline;
    direction: rtl;
    text-align: center;
}
.btn-wrap {
    display: flex;
    justify-content: flex-end;
    padding-right: 49px;
}
.main-btn {
    width: 110px;
    height: 36px;
    display: flex;
    align-items: center;
    justify-content: center;
    background-color: #b9cde5;
    border: 4px solid #5e8bc0;
    border-top-color: #a9c4e4;
    border-left-color: #a9c4e4;
    outline: 1px solid #4f81bd;
    outline-offset: -1px;
    font-size: 10px;
    font-weight: bold;
    color: #0d1b2a;
    text-shadow: 0 0 3px #4fd0f8, 0 0 3px #4fd0f8, 0 0 2px #4fd0f8;
}
.hd td {
    background-color: #c5d9f1;
    font-size: 8.800px;
    line-height: 13px;
    color: #333;
}
.hd td.rh {
    background-color: #e6e6e6;
    font-size: 7.500px;
    border-top: none;
    color: #555;
}
.num {
    font-family: "Open Sans", sans-serif;
    font-weight: bold;
    font-size: 9.500px;
    color: #222;
}
.val {
    font-size: 9.500px;
    font-family: "Open Sans", sans-serif;
}
.val.ar {
    font-family: "DejaVu Sans", sans-serif;
    font-size: 8.500px;
}
td.active {
    border: 2px solid #217346;
    font-size: 8.500px;
}
.dd-cell {
    position: relative;
}
.dd {
    position: absolute;
    right: 0;
    top: 0;
    bottom: 0;
    width: 11px;
    background-color: #f0f0f0;
    border: 1px solid #bbb;
    display: flex;
    align-items: center;
    justify-content: center;
}
.tooltip {
    position: absolute;
    left: 702px;
    top: 79px;
    width: 75px;
    height: 58px;
    padding: 2px 3px;
    background-color: #fffde8;
    border: 1px solid #c8c8b4;
    box-shadow: 1px 1px 1px #bbb;
    font-size: 7.300px;
    line-height: 11px;
    color: #777;
    text-align: right;
}
.tooltip b {
    display: block;
    color: #555;
    margin-bottom: 2px;
    line-height: 11px;
    font-weight: bold;
}
.tooltip p {
    margin: 0;
}

/* sheet tabs */
.sheettabs {
    height: 18px;
    flex: none;
    display: flex;
    align-items: center;
    background-color: #ededed;
    border-top: 1px solid #c6c6c6;
    position: relative;
}
.hscroll {
    width: 370px;
    height: 11px;
    margin-top: 1px;
    background-color: #fff;
    border: 1px solid #ababab;
    position: relative;
}
.arrow-r {
    position: absolute;
    right: 2px;
    top: 2px;
    border-style: solid;
    border-width: 2.500px 0 2.500px 3px;
    border-color: transparent transparent transparent #333;
}
.grip-tabs {
    width: 18px;
}
.plus {
    margin-left: 3px;
}
.dots {
    margin-left: 8px;
    width: 11px;
    color: #217346;
    font-weight: bold;
    flex: none;
}
.stabs {
    display: flex;
    height: 17px;
    align-items: center;
    font-size: 9px;
    color: #555;
}
.stabs span {
    height: 12px;
    line-height: 12px;
    text-align: center;
    border-right: 1px solid #b5b5b5;
    white-space: nowrap;
    flex: none;
}
.st30 { width: 30px; }
.st33 { width: 33px; }
.st34 { width: 34px; }
.st35 { width: 35px; }
.st36 { width: 36px; }
.st42 { width: 42px; }
.st49 { width: 49px; }
.st70 { width: 70px; }
.st78 { width: 78px; }
.stabs .st-on {
    height: 17px;
    line-height: 15px;
    background-color: #fff;
    color: #217346;
    border: none;
    border-bottom: 2px solid #217346;
}
.tab-nav {
    margin-left: 26px;
    display: flex;
    gap: 14px;
}

/* status bar */
.status {
    height: 16px;
    flex: none;
    display: flex;
    align-items: center;
    background-color: #f0f0f0;
    padding-left: 4px;
}
.acc {
    font-size: 7.500px;
    font-weight: bold;
    color: #333;
}
.views {
    margin-left: auto;
    display: flex;
    height: 16px;
    align-items: center;
}
.view {
    width: 28px;
    height: 16px;
    display: flex;
    align-items: center;
    justify-content: center;
}
.view-on {
    background-color: #d2d2d2;
}
.zoom {
    display: flex;
    align-items: center;
    margin-left: 3px;
    color: #555;
    width: 122px;
}
.zm {
    width: 10px;
    text-align: center;
    flex: none;
}
.slider {
    position: relative;
    width: 70px;
    height: 1px;
    flex: none;
    margin: 0 2px;
    background-color: #666;
}
.thumb {
    position: absolute;
    left: 26px;
    top: -4px;
    width: 3px;
    height: 9px;
    background-color: #444;
}
.pct {
    margin-left: 6px;
    font-size: 8px;
}

/* windows watermark */
.activate {
    position: absolute;
    left: 821px;
    top: 514px;
    color: rgba(120, 120, 120, 0.45);
    pointer-events: none;
    white-space: nowrap;
}
.a1 {
    font-size: 12.500px;
    line-height: 17px;
    font-family: "Open Sans", sans-serif;
}
.a2 {
    font-size: 8.500px;
    margin-top: 2px;
    font-family: "Open Sans", sans-serif;
}
```
